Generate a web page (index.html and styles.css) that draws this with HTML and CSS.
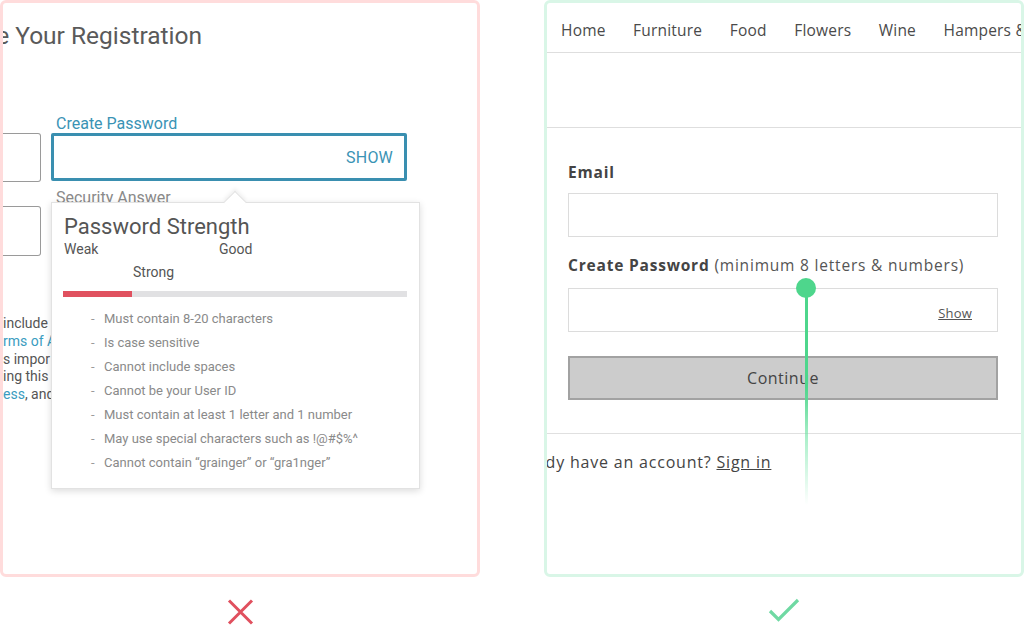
FILE: index.html
```html
<!DOCTYPE html>
<html lang="en">
<head>
<meta charset="utf-8">
<title>Password field comparison</title>
<link rel="stylesheet" href="styles.css">
</head>
<body>
<main class="page">
  <div class="col">
    <section class="panel panel-bad">
      <h1 class="reg-title">Complete Your Registration</h1>
      <div class="reg-form">
        <div class="reg-left">
          <div class="box"></div>
          <div class="box box-2"></div>
        </div>
        <div class="reg-right">
          <div class="pw-label">Create Password</div>
          <div class="pw-input"><span class="pw-show">SHOW</span></div>
          <div class="sec-label">Security Answer</div>
        </div>
      </div>
      <div class="terms">
        <div>include</div>
        <div><span class="link">rms of A</span></div>
        <div>s impor</div>
        <div>ing this</div>
        <div><span class="link">ess</span>, and</div>
      </div>
      <div class="popup">
        <div class="popup-arrow"></div>
        <div class="popup-title">Password Strength</div>
        <div class="levels">
          <span class="lv-weak">Weak</span>
          <span class="lv-good">Good</span>
          <span class="lv-strong">Strong</span>
        </div>
        <div class="meter"><div class="meter-fill" style="width:69px"></div></div>
        <ul class="rules">
          <li>Must contain 8-20 characters</li>
          <li>Is case sensitive</li>
          <li>Cannot include spaces</li>
          <li>Cannot be your User ID</li>
          <li>Must contain at least 1 letter and 1 number</li>
          <li>May use special characters such as !@#$%^</li>
          <li>Cannot contain “grainger” or “gra1nger”</li>
        </ul>
      </div>
    </section>
    <div class="verdict">
      <svg width="30" height="30" viewBox="0 0 30 30" aria-label="wrong"><path d="M4 3.5 L27 26.5 M27 3.5 L4 26.5" stroke="#e0505e" stroke-width="3" fill="none"/></svg>
    </div>
  </div>

  <div class="col">
    <section class="panel panel-good">
      <nav class="nav">
        <span>Home</span><span>Furniture</span><span>Food</span><span>Flowers</span><span>Wine</span><span>Hampers &amp; Gifts</span>
      </nav>
      <div class="banner"></div>
      <div class="form">
        <div class="f-label">Email</div>
        <div class="f-input"></div>
        <div class="f-label f-label-pw">Create Password <span class="hint">(minimum 8 letters &amp; numbers)</span></div>
        <div class="f-input f-input-pw"><span class="f-show">Show</span></div>
        <div class="btn">Continue</div>
      </div>
      <div class="signin">Already have an account? <span class="signin-link">Sign in</span></div>
      <div class="marker"><div class="marker-dot"></div><div class="marker-line"></div></div>
    </section>
    <div class="verdict">
      <svg width="34" height="30" viewBox="0 0 34 30" aria-label="correct"><path d="M3 14 L11.5 22.5 L31 3" stroke="#6fd9a3" stroke-width="3.2" fill="none"/></svg>
    </div>
  </div>
</main>
</body>
</html>
```

FILE: styles.css
```css
* { box-sizing: border-box; }
html, body { margin: 0; padding: 0; background: #ffffff; }
body { width: 1024px; height: 634px; overflow: hidden; }

.page {
  display: flex;
  gap: 64px;
  width: 1024px;
}
.col { width: 480px; display: flex; flex-direction: column; }

.panel {
  position: relative;
  height: 577px;
  border: 3px solid #ffdcdc;
  border-radius: 6px;
  overflow: hidden;
  background: #fff;
}
.panel-good { border-color: #d9f6e7; }

.verdict {
  height: 57px;
  display: flex;
  justify-content: center;
  padding-top: 20px;
}
.verdict svg { display: block; }

/* ---------- left: bad example ---------- */
.panel-bad { font-family: Roboto, "Liberation Sans", sans-serif; }

.reg-title {
  margin: 18px 0 0 -99px;
  font-size: 24.5px;
  line-height: 29px;
  font-weight: 400;
  color: #5a5a5a;
  white-space: nowrap;
}

.reg-form {
  display: flex;
  gap: 10px;
  margin-top: 65px;
  align-items: flex-start;
}
.reg-left { width: 38px; padding-top: 18px; }
.box {
  height: 49px;
  border: 1px solid #9a9a9a;
  border-left: none;
  border-radius: 0 3px 3px 0;
}
.box-2 { margin-top: 24px; height: 50px; }

.reg-right { width: 356px; }
.pw-label {
  font-size: 16px;
  line-height: 18px;
  color: #3a93b5;
  padding-left: 5px;
}
.pw-input {
  height: 48px;
  border: 3px solid #3a8fb0;
  border-radius: 2px;
  display: flex;
  align-items: center;
  justify-content: flex-end;
  padding-right: 11px;
}
.pw-show { font-size: 16px; color: #3a93b5; letter-spacing: 0.2px; }
.sec-label {
  margin-top: 8px;
  font-size: 16px;
  line-height: 18px;
  color: #8a8a8a;
  padding-left: 5px;
}

.terms {
  margin-top: 59px;
  font-size: 14px;
  line-height: 17.75px;
  color: #555;
  white-space: nowrap;
}
.terms .link { color: #3a9cc0; }

.popup {
  position: absolute;
  left: 48px;
  top: 199px;
  width: 369px;
  height: 287px;
  background: #fff;
  border: 1px solid #e2e2e2;
  box-shadow: 0 2px 7px rgba(0, 0, 0, 0.14);
  padding: 11px 12px 0 11px;
}
.popup-arrow {
  position: absolute;
  left: 175px;
  top: -9px;
  width: 16px;
  height: 16px;
  background: #fff;
  border-left: 1px solid #e2e2e2;
  border-top: 1px solid #e2e2e2;
  transform: rotate(45deg);
  box-shadow: -2px -2px 4px rgba(0, 0, 0, 0.06);
}
.popup-title {
  position: relative;
  font-size: 22px;
  line-height: 26px;
  color: #555;
  padding-left: 1px;
}
.levels {
  display: grid;
  grid-template-columns: 69px 86px 1fr;
  margin-top: -2px;
  font-size: 14px;
  line-height: 23px;
  color: #555;
  padding-left: 1px;
}
.lv-weak { grid-column: 1; grid-row: 1; }
.lv-good { grid-column: 3; grid-row: 1; }
.lv-strong { grid-column: 2; grid-row: 2; }

.meter {
  margin-top: 7px;
  width: 344px;
  height: 6px;
  background: #e1e1e3;
}
.meter-fill { height: 6px; background: #e0515f; }

.rules {
  list-style: none;
  margin: 10px 0 0;
  padding: 0 0 0 28px;
  font-size: 13px;
  line-height: 24px;
  color: #8a8a8a;
}
.rules li { position: relative; padding-left: 13px; white-space: nowrap; }
.rules li::before {
  content: "-";
  position: absolute;
  left: 0;
  color: #9a9a9a;
}

/* ---------- right: good example ---------- */
.panel-good { font-family: "Open Sans", Lato, sans-serif; color: #444; }

.nav {
  height: 50px;
  padding: 5px 0 0 14px;
  display: flex;
  align-items: center;
  gap: 27.5px;
  font-size: 15.5px;
  letter-spacing: 0.2px;
  color: #4a4a4a;
  white-space: nowrap;
  border-bottom: 1px solid #dedede;
}
.nav span { flex: none; }

.banner {
  height: 75px;
  border-bottom: 1px solid #dedede;
}

.form {
  padding: 34px 23px 0 21px;
}
.f-label {
  font-size: 15.5px;
  line-height: 20px;
  font-weight: 700;
  color: #444;
  letter-spacing: 0.8px;
}
.f-label .hint { font-weight: 400; color: #555; }
.f-label-pw { margin-top: 18px; }
.f-input {
  margin-top: 11px;
  height: 44px;
  border: 1px solid #dcdcdc;
}
.f-input-pw {
  margin-top: 13px;
  height: 44px;
  display: flex;
  align-items: center;
  justify-content: flex-end;
  padding: 6px 25px 0 0;
}
.f-show {
  font-size: 13px;
  color: #555;
  text-decoration: underline;
  letter-spacing: 0.2px;
}
.btn {
  margin-top: 24px;
  height: 44px;
  background: #cccccc;
  border: 2px solid #a2a2a2;
  display: flex;
  align-items: center;
  justify-content: center;
  font-size: 16px;
  letter-spacing: 0.5px;
  color: #444;
}

.signin {
  margin-top: 33px;
  border-top: 1px solid #e0e0e0;
  padding-top: 18px;
  font-size: 16px;
  line-height: 20px;
  letter-spacing: 0.8px;
  color: #444;
  white-space: nowrap;
  text-indent: -44px;
}
.signin-link { text-decoration: underline; }

.marker {
  position: absolute;
  left: 249px;
  top: 275px;
  width: 20px;
  display: flex;
  flex-direction: column;
  align-items: center;
}
.marker-dot {
  width: 20px;
  height: 20px;
  border-radius: 50%;
  background: #4ed68c;
}
.marker-line {
  margin-top: -10px;
  width: 3px;
  height: 217px;
  background: linear-gradient(to bottom, #4ed68c 0%, #4ed68c 45%, rgba(120, 230, 170, 0.6) 70%, rgba(200, 245, 220, 0) 100%);
}
```
